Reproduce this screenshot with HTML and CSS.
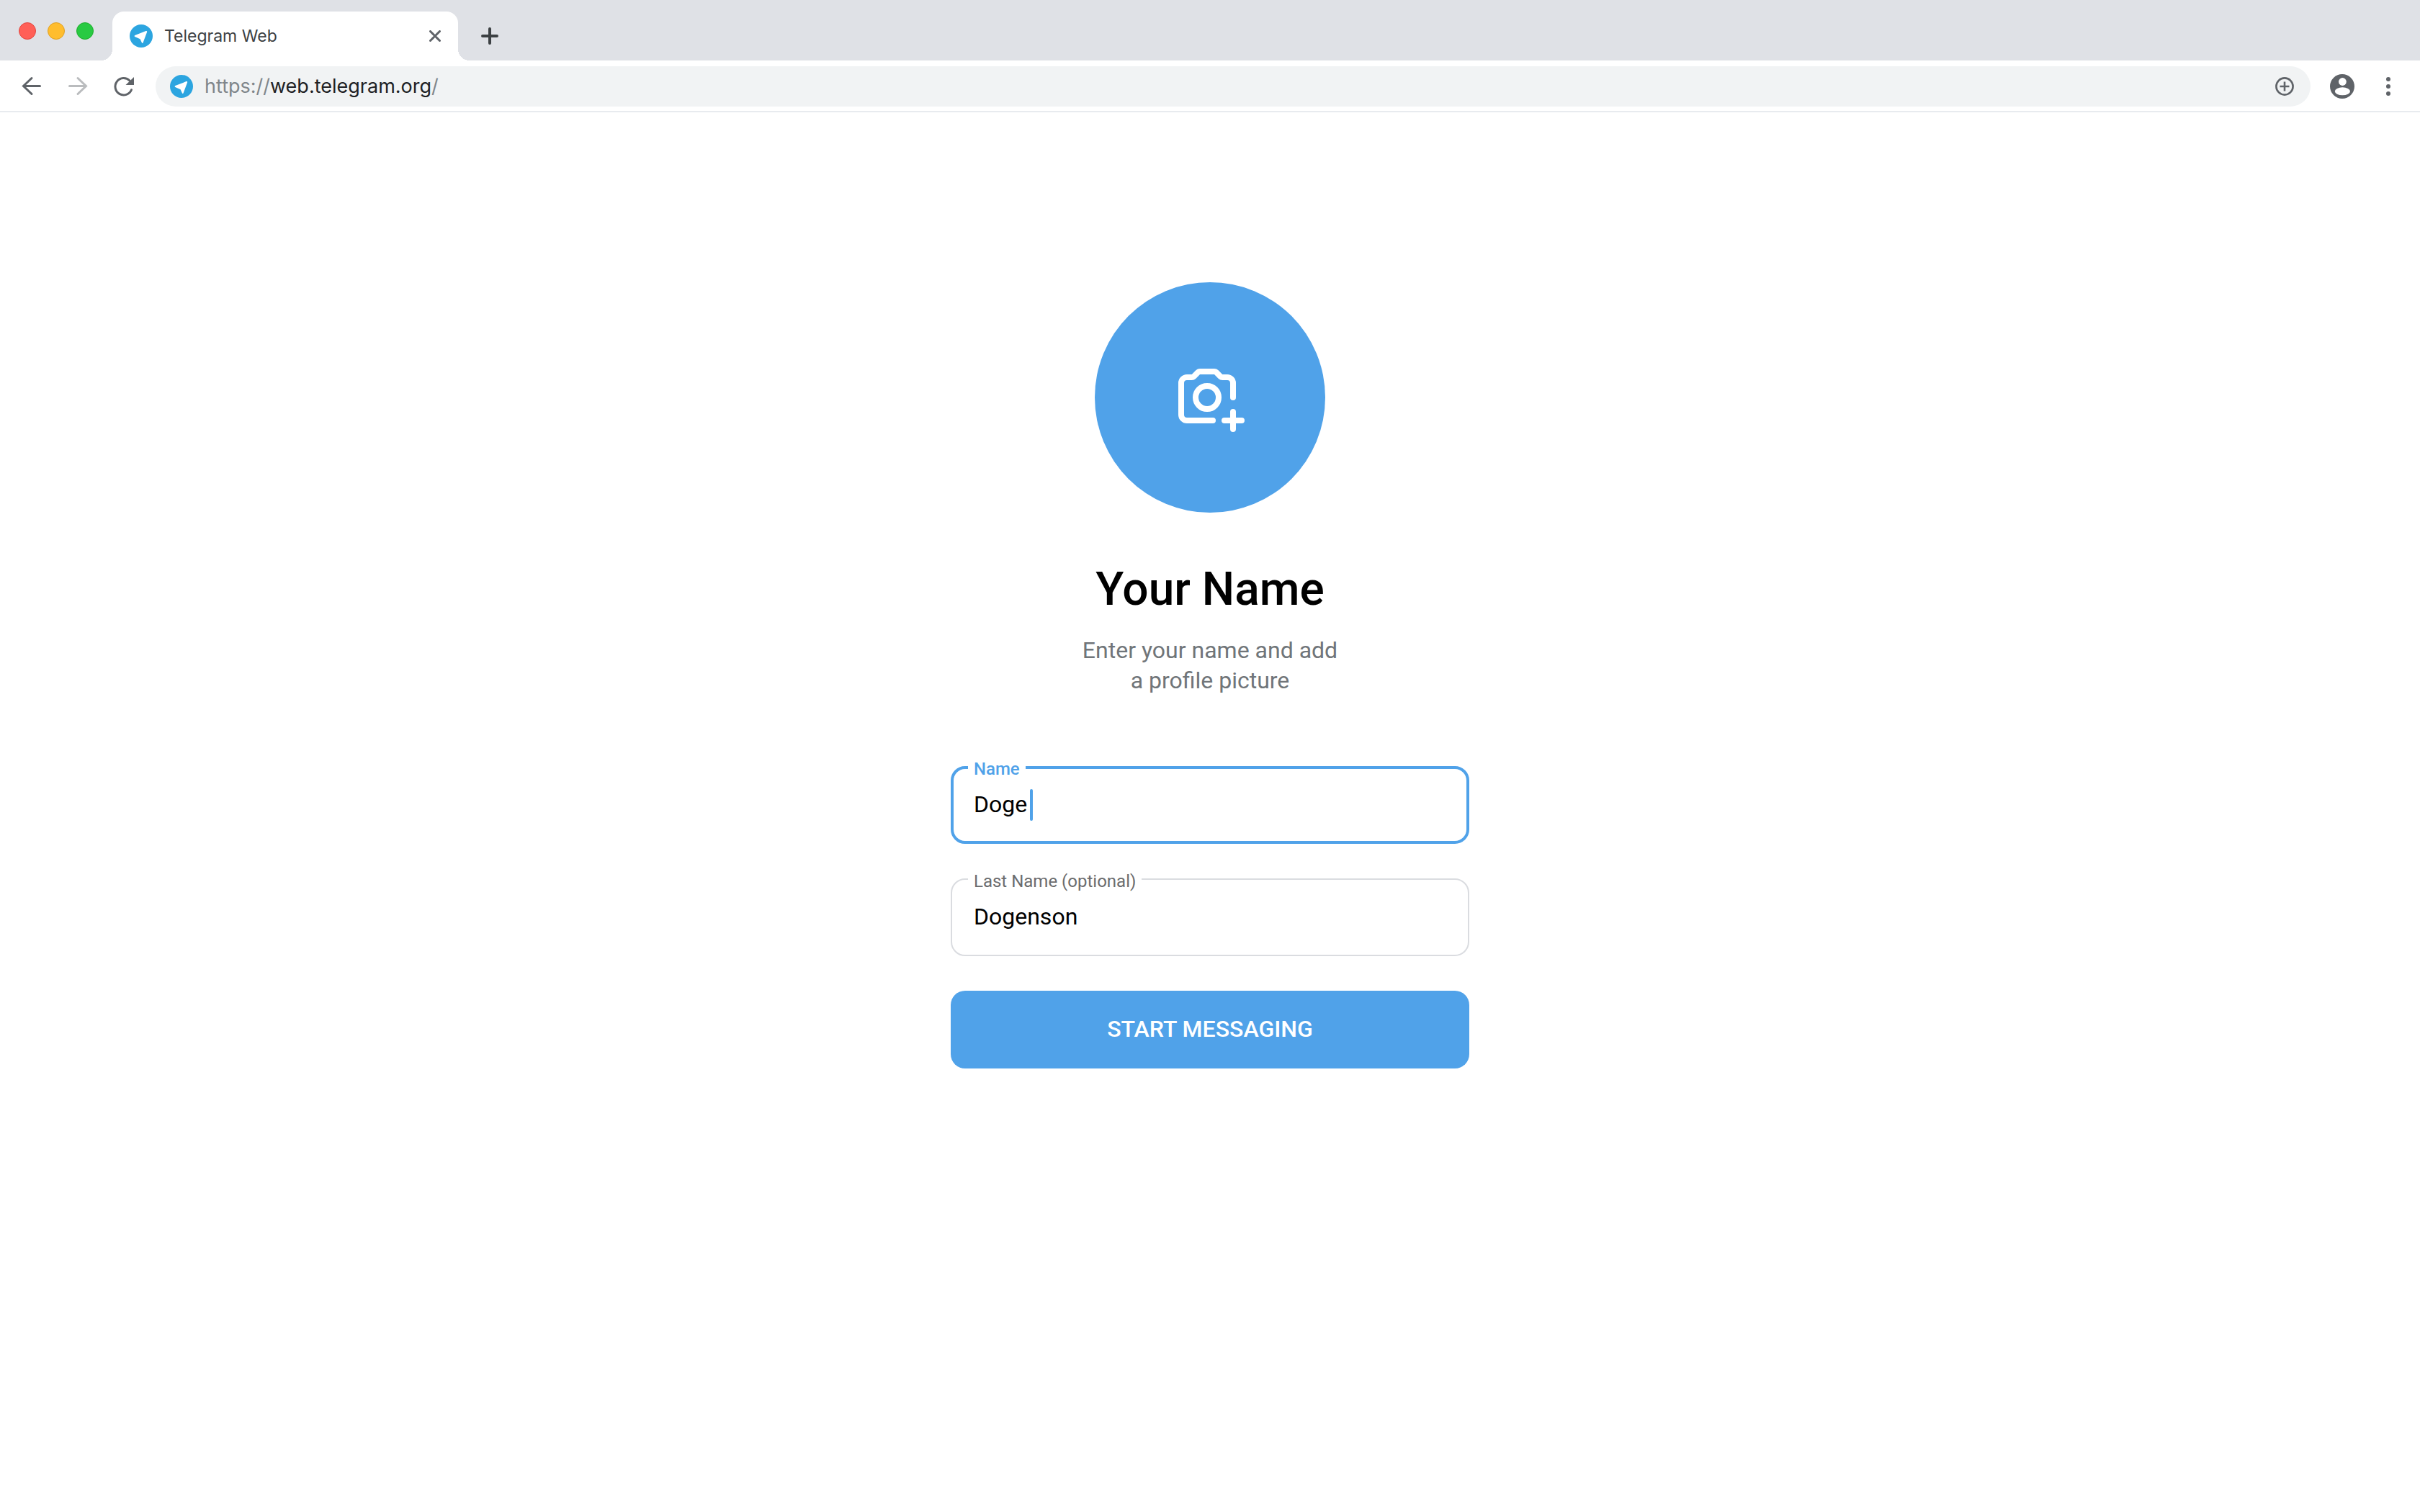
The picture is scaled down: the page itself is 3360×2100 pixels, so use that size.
FILE: index.html
```html
<!DOCTYPE html>
<html lang="en">
<head>
<meta charset="utf-8">
<meta name="viewport" content="width=device-width, initial-scale=1">
<title>Telegram Web</title>
<link rel="stylesheet" href="styles.css">
</head>
<body>
<svg class="defs" width="0" height="0" aria-hidden="true">
  <symbol id="telegram" viewBox="0 0 32 32">
    <circle cx="16" cy="16" r="16" fill="#2ca5e0"/>
    <path d="M22.600 9.100C23.600 8.700 24.400 9.400 24.100 10.400L18.600 25.200C18.300 26.200 17.300 26.200 16.900 25.300L14.600 20.300L7.300 16.900C6.300 16.500 6.400 15.500 7.400 15.100Z" fill="#fff"/>
  </symbol>
</svg>

<header class="browser">
  <div class="tabstrip">
    <div class="lights">
      <span class="light light-close"></span>
      <span class="light light-min"></span>
      <span class="light light-max"></span>
    </div>
    <div class="tab">
      <svg class="favicon" aria-hidden="true"><use href="#telegram"/></svg>
      <span class="tab-title">Telegram Web</span>
      <button class="icon-button" type="button" aria-label="Close tab">
        <svg width="16" height="16" viewBox="0 0 16 16" fill="none" stroke="#5f6368" stroke-width="3" stroke-linecap="round"><path d="M1.500 1.500l13 13M14.500 1.500l-13 13"/></svg>
      </button>
    </div>
    <button class="icon-button new-tab" type="button" aria-label="New tab">
      <svg width="24" height="24" viewBox="0 0 24 24" fill="none" stroke="#3c4043" stroke-width="4" stroke-linecap="round"><path d="M12 2v20M2 12h20"/></svg>
    </button>
  </div>

  <div class="toolbar">
    <nav class="nav">
      <button class="icon-button" type="button" aria-label="Back">
        <svg width="32" height="32" viewBox="0 0 32 32" fill="none" stroke="#5f6368" stroke-width="3" stroke-linecap="round"><path d="M27.500 15.500H5M16 4.500L4.500 15.500L16 26.500"/></svg>
      </button>
      <button class="icon-button" type="button" aria-label="Forward" disabled>
        <svg width="32" height="32" viewBox="0 0 32 32" fill="none" stroke="#babcbe" stroke-width="3" stroke-linecap="round"><path d="M4.500 15.500H27M16 4.500L27.500 15.500L16 26.500"/></svg>
      </button>
      <button class="icon-button" type="button" aria-label="Reload">
        <svg width="32" height="32" viewBox="0 0 32 32"><path d="M26.500 20.700A11.700 11.700 0 1 1 24 8" fill="none" stroke="#5f6368" stroke-width="3" stroke-linecap="round"/><path d="M30 3V14H18.500Z" fill="#5f6368"/></svg>
      </button>
    </nav>
    <div class="omnibox">
      <svg class="favicon" aria-hidden="true"><use href="#telegram"/></svg>
      <a class="url" href="#">https://<span class="host">web.telegram.org</span>/</a>
      <button class="icon-button" type="button" aria-label="Install">
        <svg width="26" height="26" viewBox="0 0 26 26" fill="none" stroke="#5f6368" stroke-width="2.600"><circle cx="13" cy="13" r="11.600"/><path d="M13 6.500v13M6.500 13h13"/></svg>
      </button>
    </div>
    <button class="icon-button" type="button" aria-label="Profile">
      <svg width="34" height="34" viewBox="0 0 34 34"><circle cx="17" cy="17" r="17" fill="#5f6368"/><circle cx="17.400" cy="10.500" r="5.400" fill="#fff"/><ellipse cx="17.400" cy="23.800" rx="10.600" ry="5.500" fill="#fff"/></svg>
    </button>
    <button class="icon-button menu" type="button" aria-label="Menu">
      <svg width="6" height="26" viewBox="0 0 6 26" fill="#5f6368"><circle cx="3" cy="3" r="3"/><circle cx="3" cy="13" r="3"/><circle cx="3" cy="23" r="3"/></svg>
    </button>
  </div>
</header>

<main class="page">
  <form class="signup">
    <button class="avatar" type="button" aria-label="Add a profile picture">
      <svg width="96" height="96" viewBox="0 0 96 96" fill="none" stroke="#fff" stroke-width="8" stroke-linecap="round">
        <circle cx="44" cy="48" r="16"/>
        <path d="M52 80H16a8 8 0 0 1-8-8V28a8 8 0 0 1 8-8h6.700c1.100 0 2.100-.4 2.900-1.200l5.600-5.600c.8-.8 1.800-1.200 2.900-1.200h19.800c1.100 0 2.100.4 2.900 1.200l5.600 5.600c.8.8 1.800 1.200 2.900 1.200H72a8 8 0 0 1 8 8v20"/>
        <path d="M80 68v24M68 80h24"/>
      </svg>
    </button>
    <h1 class="title">Your Name</h1>
    <p class="subtitle">Enter your name and add<br>a profile picture</p>
    <div class="field field-active">
      <label class="label" for="first-name">Name</label>
      <input class="input" id="first-name" type="text" value="Doge">
      <span class="caret"></span>
    </div>
    <div class="field">
      <label class="label" for="last-name">Last Name (optional)</label>
      <input class="input" id="last-name" type="text" value="Dogenson">
    </div>
    <button class="submit" type="button">START MESSAGING</button>
  </form>
</main>
</body>
</html>
```
FILE: styles.css
```css
* {
  box-sizing: border-box;
}

body {
  margin: 0;
  min-height: 100vh;
  background: #fff;
  color: #000;
  font-family: Roboto, "Liberation Sans", sans-serif;
}

svg {
  display: block;
}

button {
  border: 0;
  padding: 0;
  background: none;
  font: inherit;
}

.defs {
  position: absolute;
}

.icon-button {
  display: flex;
  flex: none;
  align-items: center;
  justify-content: center;
}

.favicon {
  flex: none;
  width: 32px;
  height: 32px;
}

/* Browser chrome */
.browser {
  border-bottom: 2px solid #e8ebef;
  font-family: Inter, "Liberation Sans", sans-serif;
}

.tabstrip {
  display: flex;
  height: 84px;
  padding-top: 16px;
  background: #dfe1e6;
}

.lights {
  display: flex;
  gap: 16px;
  padding: 15px 26px;
}

.light {
  width: 24px;
  height: 24px;
  border: 1px solid;
  border-radius: 50%;
}

.light-close {
  background: #ff5f57;
  border-color: #e2463f;
}

.light-min {
  background: #ffbd2e;
  border-color: #dfa023;
}

.light-max {
  background: #28ca42;
  border-color: #1dad2b;
}

.tab {
  position: relative;
  display: flex;
  align-items: center;
  gap: 16px;
  width: 480px;
  padding: 0 24px;
  border-radius: 16px 16px 0 0;
  background: #fff;
}

/* Flared feet of the active tab */
.tab::before,
.tab::after {
  content: "";
  position: absolute;
  bottom: 0;
  width: 16px;
  height: 16px;
}

.tab::before {
  right: 100%;
  background: radial-gradient(circle at 0 0, transparent 16px, #fff 16px);
}

.tab::after {
  left: 100%;
  background: radial-gradient(circle at 100% 0, transparent 16px, #fff 16px);
}

.tab-title {
  flex: 1;
  color: #3c4043;
  font-size: 23px;
  line-height: 32px;
}

.new-tab {
  margin-left: 32px;
}

.toolbar {
  display: flex;
  align-items: center;
  gap: 27px;
  height: 70px;
  padding: 2px 41px 0 28px;
}

.nav {
  display: flex;
  gap: 32px;
}

.omnibox {
  display: flex;
  flex: 1;
  align-items: center;
  gap: 16px;
  height: 56px;
  padding: 0 23px 0 20px;
  margin-left: 1px;
  border-radius: 28px;
  background: #f1f3f4;
}

.url {
  flex: 1;
  color: #80868b;
  font-size: 27px;
  line-height: 32px;
  text-decoration: none;
}

.host {
  color: #202124;
}

.menu {
  margin-left: 17px;
}

/* Sign-up form */
.page {
  display: flex;
  justify-content: center;
  padding: 236px 24px 48px;
}

.signup {
  display: flex;
  flex-direction: column;
  width: 720px;
}

.avatar {
  display: flex;
  align-items: center;
  justify-content: center;
  align-self: center;
  width: 320px;
  height: 320px;
  border-radius: 50%;
  background: #50a2e9;
}

.title {
  margin: 65px 0 0;
  font-size: 64px;
  font-weight: 500;
  line-height: 84px;
  text-align: center;
}

.subtitle {
  margin: 21px 0 98px;
  color: #707579;
  font-size: 32px;
  line-height: 42px;
  text-align: center;
}

.field {
  position: relative;
  margin-bottom: 48px;
}

.label {
  position: absolute;
  top: -10px;
  left: 24px;
  padding: 0 8px;
  background: #fff;
  color: #6b6c6e;
  font-size: 24px;
  line-height: 28px;
}

.input {
  display: block;
  width: 100%;
  height: 108px;
  padding: 0 30px 2px;
  border: 2px solid #dadce0;
  border-radius: 20px;
  outline: 0;
  background: #fff;
  color: #000;
  font: 32px/42px Roboto, "Liberation Sans", sans-serif;
}

.field-active .label {
  color: #50a2e9;
  font-weight: 500;
}

.field-active .input {
  padding: 0 28px 2px;
  border: 4px solid #50a2e9;
}

.caret {
  position: absolute;
  top: 32px;
  left: 110px;
  width: 4px;
  height: 44px;
  border-radius: 2px;
  background: #50a2e9;
}

.submit {
  height: 108px;
  padding-bottom: 2px;
  border-radius: 20px;
  background: #50a2e9;
  color: #fff;
  font-size: 32px;
  font-weight: 500;
  line-height: 42px;
}
```
